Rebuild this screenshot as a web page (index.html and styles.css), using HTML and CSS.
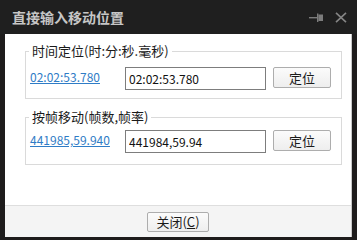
FILE: index.html
```html
<!DOCTYPE html>
<html lang="zh-CN">
<head>
<meta charset="utf-8">
<title>直接输入移动位置</title>
<link rel="stylesheet" href="styles.css">
</head>
<body>
<div class="window">
  <div class="titlebar">
    <span class="title">直接输入移动位置</span>
    <div class="tools">
      <svg class="pin" width="16" height="10" viewBox="0 0 16 10">
        <rect x="0" y="4" width="8" height="1.4" fill="#7c7c7c"/>
        <rect x="8" y="0.5" width="1.4" height="8.5" fill="#7c7c7c"/>
        <rect x="9.4" y="1.5" width="4.6" height="6.5" fill="#7c7c7c"/>
      </svg>
      <svg class="close" width="12" height="11" viewBox="0 0 12 11">
        <path d="M1 0.8 L11 10.2 M11 0.8 L1 10.2" stroke="#858585" stroke-width="1.6" fill="none"/>
      </svg>
    </div>
  </div>
  <div class="client">
    <div class="content">
      <fieldset class="group g1">
        <legend>时间定位(时:分:秒.毫秒)</legend>
        <div class="row">
          <a class="link" href="#">02:02:53.780</a>
          <input class="field" type="text" value="02:02:53.780">
          <button class="btn locate">定位</button>
        </div>
      </fieldset>
      <fieldset class="group g2">
        <legend>按帧移动(帧数,帧率)</legend>
        <div class="row">
          <a class="link" href="#">441985,59.940</a>
          <input class="field" type="text" value="441984,59.94">
          <button class="btn locate">定位</button>
        </div>
      </fieldset>
    </div>
    <div class="footer">
      <button class="btn closebtn">关闭(<u>C</u>)</button>
    </div>
  </div>
</div>
</body>
</html>
```
FILE: styles.css
```css
html, body {
  margin: 0;
  padding: 0;
  background: #1c1a1a;
}
body {
  font-family: "Noto Sans CJK SC", "Noto Sans", sans-serif;
  color: #1a1a1a;
}
.window {
  width: 357px;
  height: 240px;
  display: flex;
  flex-direction: column;
  background: #1e1c1c;
}
.titlebar {
  height: 34px;
  flex: none;
  display: flex;
  align-items: center;
  padding-left: 12px;
  padding-right: 10px;
  background: #1f1f1f;
}
.title {
  font-size: 14px;
  font-weight: bold;
  color: #c6c6c6;
  line-height: 18px;
  margin-top: -1px;
}
.tools {
  margin-left: auto;
  display: flex;
  align-items: center;
  gap: 10px;
  margin-top: 1px;
}
.pin { display: block; margin-top: 1px; }
.close { display: block; }
.client {
  flex: 1;
  margin: 0 5px 3px 5px;
  border-right: 1px solid #c8c8c8;
  background: #ffffff;
  display: flex;
  flex-direction: column;
}
.content {
  flex: 1;
  padding-top: 8px;
}
.group {
  margin: 0 9px 0 20px;
  padding: 0;
  border: 1px solid #dadada;
  min-width: 0;
}
.group legend {
  font-size: 13px;
  line-height: 18px;
  padding: 0 3px;
  margin-left: 3px;
  color: #1a1a1a;
}
.g1 { padding-top: 7px; padding-bottom: 8px; }
.g2 { margin-top: 9px; padding-top: 4px; padding-bottom: 11px; }
.row {
  display: flex;
  align-items: center;
  height: 23px;
  padding-left: 4px;
}
.link {
  width: 95px;
  flex: none;
  font-size: 12px;
  line-height: 16px;
  color: #2f7cc6;
  text-decoration: underline;
  margin-top: -3px;
}
.field {
  box-sizing: border-box;
  width: 141px;
  height: 23px;
  flex: none;
  margin: 0 7px 0 0;
  padding: 0 0 0 3px;
  border: 1px solid #7d7d7d;
  border-radius: 0;
  font-family: "Noto Sans CJK SC", "Noto Sans", sans-serif;
  font-size: 12px;
  color: #111;
  background: #fff;
  outline: none;
}
.btn {
  box-sizing: border-box;
  border: 1px solid #adadad;
  border-radius: 2px;
  background: linear-gradient(#fbfbfb, #eeeeee);
  font-family: "Noto Sans CJK SC", "Noto Sans", sans-serif;
  font-size: 13px;
  color: #1a1a1a;
  padding: 0;
  line-height: 18px;
}
.locate {
  width: 58px;
  height: 21px;
  align-self: flex-start;
}
.footer {
  box-sizing: border-box;
  height: 32px;
  flex: none;
  border-top: 1px solid #dedede;
  background: #f4f4f4;
  display: flex;
  justify-content: center;
  align-items: flex-start;
  padding-top: 6px;
}
.closebtn {
  width: 62px;
  height: 20px;
}
.closebtn u {
  text-underline-offset: 1px;
}
```
